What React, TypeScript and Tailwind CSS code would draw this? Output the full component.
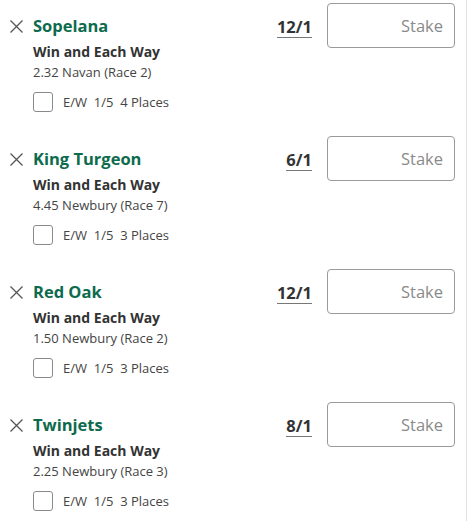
import React from "react";

type Bet = { name: string; odds: string; venue: string; places: string };

const bets: Bet[] = [
  { name: "Sopelana", odds: "12/1", venue: "2.32 Navan (Race 2)", places: "4 Places" },
  { name: "King Turgeon", odds: "6/1", venue: "4.45 Newbury (Race 7)", places: "3 Places" },
  { name: "Red Oak", odds: "12/1", venue: "1.50 Newbury (Race 2)", places: "3 Places" },
  { name: "Twinjets", odds: "8/1", venue: "2.25 Newbury (Race 3)", places: "3 Places" },
];

function CloseIcon() {
  return (
    <svg width="13" height="13" viewBox="0 0 13 13" className="shrink-0">
      <path d="M0.5 0.5 L12.5 12.5 M12.5 0.5 L0.5 12.5" stroke="#555" strokeWidth="1.3" fill="none" />
    </svg>
  );
}

function Row({ bet }: { bet: Bet }) {
  return (
    <div className="flex h-[133px] justify-between">
      <div className="flex flex-col pl-[10px] pt-[15px]">
        <div className="flex h-[22px] items-center gap-[10px]">
          <CloseIcon />
          <span className="text-[16.5px] font-bold leading-[22px] text-[#0c6b4d]">{bet.name}</span>
        </div>
        <div className="mt-[5px] pl-[23px] text-[14px] font-bold leading-[20px] text-[#333]">
          Win and Each Way
        </div>
        <div className="mt-[1px] pl-[23px] text-[13px] leading-[18px] text-[#444]">{bet.venue}</div>
        <div className="mt-[11px] flex items-center gap-[10px] pl-[23px]">
          <div className="h-[20px] w-[20px] rounded-[3px] border border-[#8a8a8a] bg-white" />
          <span className="whitespace-pre text-[13px] leading-[18px] text-[#444]">
            {"E/W  1/5  " + bet.places}
          </span>
        </div>
      </div>
      <div className="flex items-start gap-[15px] pr-[11px] pt-[3px]">
        <span className="mt-[14px] border-b border-[#777] pb-[1px] text-[16.5px] font-bold leading-[19px] text-[#333]">
          {bet.odds}
        </span>
        <div className="flex h-[45px] w-[128px] items-center justify-end rounded-[4px] border border-[#9a9a9a] bg-white pr-[11px] pt-[1px] text-[16.5px] text-[#8a8a8a]">
          Stake
        </div>
      </div>
    </div>
  );
}

export default function App() {
  return (
    <div
      className="h-[521px] w-[467px] overflow-hidden border-r border-[#e2e2e2] bg-white"
      style={{ fontFamily: '"Segoe UI", "Open Sans", "Noto Sans", sans-serif' }}
    >
      {bets.map((b) => (
        <Row key={b.name} bet={b} />
      ))}
    </div>
  );
}
